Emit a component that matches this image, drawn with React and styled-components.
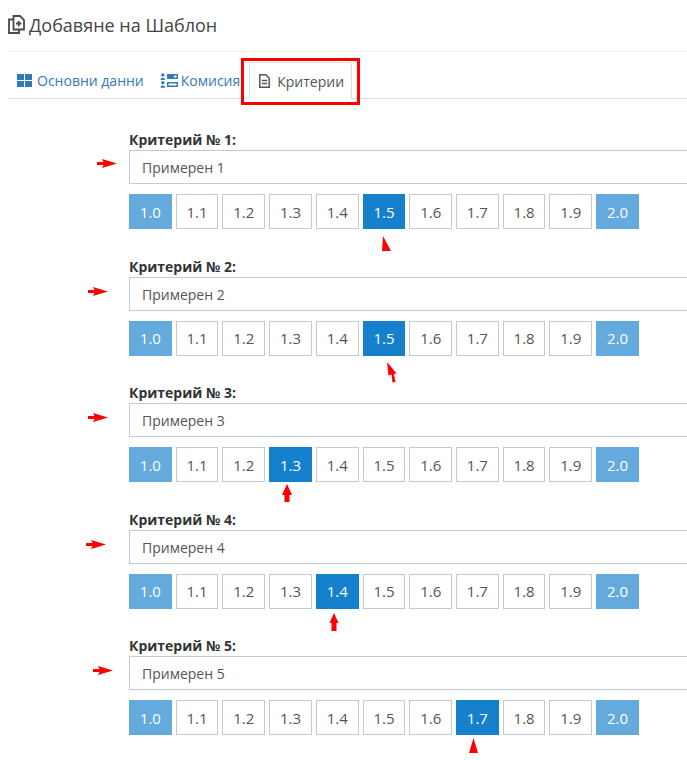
import React from "react";
import styled, { createGlobalStyle } from "styled-components";

const GlobalStyle = createGlobalStyle`
  html, body {
    margin: 0;
    padding: 0;
    background: #fff;
    overflow: hidden;
    font-family: "Open Sans", "Liberation Sans", sans-serif;
  }
`;

const Page = styled.div`
  position: relative;
  width: 687px;
  height: 760px;
  padding-left: 8px;
  box-sizing: border-box;
  overflow: hidden;
`;

const TitleBar = styled.div`
  display: flex;
  align-items: center;
  gap: 4px;
  height: 52px;
  box-sizing: border-box;
  padding-bottom: 2px;
  border-bottom: 1px solid #eef1f5;
  color: #444;
  font-size: 18px;
`;

const Tabs = styled.div`
  display: flex;
  align-items: flex-end;
  height: 47px;
  box-sizing: border-box;
  border-bottom: 1px solid #ddd;
`;

const Tab = styled.div`
  display: flex;
  align-items: center;
  height: 36px;
  box-sizing: border-box;
  padding: 0 ${(p) => p.$right}px 0 ${(p) => p.$left}px;
  gap: ${(p) => p.$gap}px;
  font-size: 14px;
  color: ${(p) => (p.$active ? "#555" : "#337ab7")};
  border: 1px solid ${(p) => (p.$active ? "#ddd" : "transparent")};
  border-bottom: 0;
  ${(p) => p.$active && "background: #fff; margin-bottom: -1px; height: 37px;"}
`;

const Highlight = styled.div`
  position: absolute;
  left: 241px;
  top: 58px;
  width: 119px;
  height: 47px;
  box-sizing: border-box;
  border: 3px solid #f00;
`;

const Form = styled.div`
  display: flex;
  flex-direction: column;
  gap: 27.5px;
  padding: 31px 0 0 121px;
`;

const Criterion = styled.div`
  display: flex;
  flex-direction: column;
`;

const Label = styled.div`
  height: 20px;
  line-height: 19px;
  font-size: 14px;
  font-weight: 700;
  color: #333;
`;

const Field = styled.div`
  width: 600px;
  height: 34px;
  box-sizing: border-box;
  padding: 0 12px;
  border: 1px solid #c2cad8;
  font-size: 14px;
  line-height: 33px;
  color: #555;
`;

const Scale = styled.div`
  display: flex;
  gap: 4px;
  margin-top: 10px;
`;

const Score = styled.div`
  width: 42.72px;
  height: 35px;
  box-sizing: border-box;
  display: flex;
  align-items: center;
  justify-content: center;
  font-size: 15px;
  color: ${(p) => (p.$filled ? "#fff" : "#555")};
  background: ${(p) => p.$filled || "#fff"};
  border: 1px solid ${(p) => p.$filled || "#c2cad8"};
`;

const Pointer = styled.svg`
  position: absolute;
  left: ${(p) => p.$x}px;
  top: ${(p) => p.$y}px;
`;

const CopyPlusIcon = () => (
  <svg width="17" height="19" viewBox="0 0 17 19" fill="none" stroke="#4a4a4a" strokeWidth="1.800">
    <path d="M5.500 1h6.500l4 4v9.500h-10.500z" />
    <path d="M5.500 4.500h-4.500v13.500h10v-3.500" />
    <path d="M8 8.500h5.500M10.700 6v5.500" />
  </svg>
);

const GridIcon = () => (
  <svg width="15" height="13" viewBox="0 0 15 13" fill="#337ab7">
    <rect x="0" y="0" width="7" height="6" />
    <rect x="8" y="0" width="7" height="6" />
    <rect x="0" y="7" width="7" height="6" />
    <rect x="8" y="7" width="7" height="6" />
  </svg>
);

const CommissionIcon = () => (
  <svg width="18" height="15" viewBox="0 0 18 15" fill="#337ab7">
    <circle cx="2.800" cy="2" r="1.700" />
    <path d="M.5 7c0-3 4.600-3 4.600 0z" />
    <circle cx="2.800" cy="9.700" r="1.700" />
    <path d="M.5 14.800c0-3 4.600-3 4.600 0z" />
    <path d="M7 1h11v5H7zM14 2.500v2h2.500v-2z" fillRule="evenodd" />
    <path d="M7 9h11v5H7zM8.500 10.500v2h8v-2z" fillRule="evenodd" />
  </svg>
);

const FileIcon = () => (
  <svg width="11" height="14" viewBox="0 0 11 14" fill="none" stroke="#555" strokeWidth="1.500">
    <path d="M.8.8h6l3.400 3.400v9h-9.400z" />
    <path d="M2.800 6.500h5.400M2.800 9.500h5.400" strokeWidth="1.500" />
  </svg>
);

// red arrows drawn over the screenshot, paths are relative to their own box
const RIGHT = "M0 3h6.500L5 0 20 4.500 5 9l1.500-3H0z";

const arrows = [
  { x: 97, y: 159, w: 20, h: 9, d: RIGHT },
  { x: 88, y: 287, w: 20, h: 9, d: RIGHT },
  { x: 88, y: 413, w: 20, h: 9, d: RIGHT },
  { x: 86, y: 540, w: 20, h: 9, d: RIGHT },
  { x: 93, y: 666, w: 20, h: 9, d: RIGHT },
  { x: 382, y: 236, w: 9, h: 15, d: "M1 0L9 15H0z" },
  { x: 387, y: 362, w: 10, h: 21, d: "M0 0l9.500 11.500-2.500.5L8.500 20l-3 .500L4.500 12.500 1.500 13.500z" },
  { x: 282, y: 484, w: 10, h: 18, d: "M5 0l5 11H7.500v7h-5v-7H0z" },
  { x: 329, y: 613, w: 10, h: 18, d: "M5 0l4.500 10H7.500v8h-5v-8H.5z" },
  { x: 469, y: 738, w: 9, h: 15, d: "M4.500 0L9 15H0z" },
];

const scores = ["1.0", "1.1", "1.2", "1.3", "1.4", "1.5", "1.6", "1.7", "1.8", "1.9", "2.0"];

const criteria = [
  { n: 1, picked: "1.5" },
  { n: 2, picked: "1.5" },
  { n: 3, picked: "1.3" },
  { n: 4, picked: "1.4" },
  { n: 5, picked: "1.7" },
];

const fill = (s, picked) => {
  if (s === picked) return "#1581cc";
  if (s === "1.0" || s === "2.0") return "#65aadd";
  return undefined;
};

export default function App() {
  return (
    <Page>
      <GlobalStyle />
      <TitleBar>
        <CopyPlusIcon />
        Добавяне на Шаблон
      </TitleBar>
      <Tabs>
        <Tab $left={8} $right={8} $gap={5}>
          <GridIcon />
          Основни данни
        </Tab>
        <Tab $left={6} $right={8} $gap={3}>
          <CommissionIcon />
          Комисия
        </Tab>
        <Tab $active $left={9} $right={7} $gap={7}>
          <FileIcon />
          Критерии
        </Tab>
      </Tabs>
      <Highlight />
      <Form>
        {criteria.map((c) => (
          <Criterion key={c.n}>
            <Label>Критерий № {c.n}:</Label>
            <Field>Примерен {c.n}</Field>
            <Scale>
              {scores.map((s) => (
                <Score key={s} $filled={fill(s, c.picked)}>
                  {s}
                </Score>
              ))}
            </Scale>
          </Criterion>
        ))}
      </Form>
      {arrows.map((a) => (
        <Pointer key={a.x + "-" + a.y} $x={a.x} $y={a.y} width={a.w} height={a.h} viewBox={`0 0 ${a.w} ${a.h}`} fill="#f00">
          <path d={a.d} />
        </Pointer>
      ))}
    </Page>
  );
}
